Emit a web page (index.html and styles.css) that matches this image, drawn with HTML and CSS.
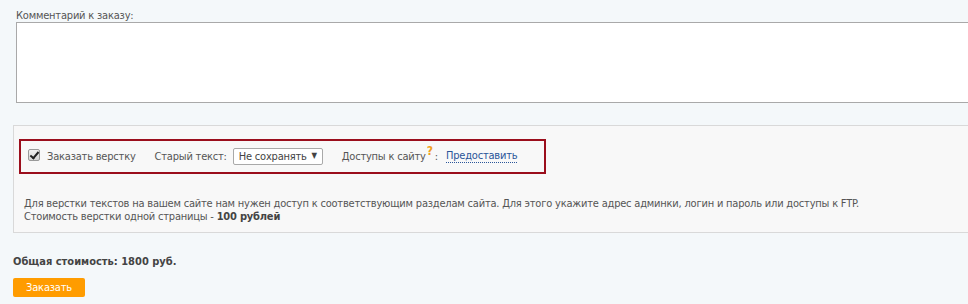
FILE: index.html
```html
<!DOCTYPE html>
<html lang="ru">
<head>
    <meta charset="UTF-8">
    <title>Заказ</title>
    <link rel="stylesheet" href="styles.css">
</head>
<body>
    <div class="order">
        <div class="comment">
            <label class="comment-label" for="comment">Комментарий к заказу:</label>
            <textarea id="comment" class="comment-field"></textarea>
        </div>

        <div class="layout-panel">
            <div class="layout-options">
                <label class="check">
                    <input type="checkbox" checked>
                    <span>Заказать верстку</span>
                </label>
                <span class="old-text">Старый текст:</span>
                <span class="fake-select">Не сохранять <span class="arrow">▼</span></span>
                <span class="access">Доступы к сайту<sup class="hint">?</sup>:</span>
                <a href="#" class="give-link">Предоставить</a>
            </div>
            <p class="layout-note">
                Для верстки текстов на вашем сайте нам нужен доступ к соответствующим разделам сайта. Для этого укажите адрес админки, логин и пароль или доступы к FTP.<br>
                Стоимость верстки одной страницы - <b>100 рублей</b>
            </p>
        </div>

        <div class="total">Общая стоимость: 1800 руб.</div>
        <button class="order-btn">Заказать</button>
    </div>
</body>
</html>
```

FILE: styles.css
```css
body {
    margin: 0;
    background: #f4f8fa;
    font-family: 'DejaVu Sans Condensed', 'Liberation Sans', sans-serif;
    font-size: 11px;
    letter-spacing: -0.2px;
    color: #555;
    overflow: hidden;
}
.order {
    padding-left: 13px;
    width: 1000px;
}
.comment {
    padding: 9px 0 0 3px;
}
.comment-label {
    display: block;
    line-height: 13px;
}
.comment-field {
    display: block;
    box-sizing: border-box;
    width: 970px;
    height: 81px;
    margin: 0;
    border: 1px solid #a9a9a9;
    background: #fff;
    resize: none;
}
.layout-panel {
    box-sizing: border-box;
    margin-top: 22px;
    width: 975px;
    height: 108px;
    padding: 13px 5px 0;
    background: #f8f8f8;
    border: 1px solid #d9d9d9;
}
.layout-options {
    box-sizing: border-box;
    display: flex;
    align-items: center;
    width: 527px;
    height: 35px;
    padding: 0 0 1px 7px;
    border: 2px solid #9b0e1c;
    white-space: nowrap;
}
.check {
    display: flex;
    align-items: center;
}
.check input {
    appearance: none;
    position: relative;
    box-sizing: border-box;
    width: 12px;
    height: 12px;
    margin: 0 7px 3px 0;
    border: 1px solid #9a9a9a;
    border-radius: 2px;
    background: linear-gradient(#f2f2f2, #d6d6d6);
}
.check input:checked::after {
    content: '';
    position: absolute;
    left: 3px;
    top: 0;
    width: 3px;
    height: 7px;
    border: solid #222;
    border-width: 0 2px 2px 0;
    transform: rotate(40deg);
}
.old-text {
    margin-left: 19px;
}
.fake-select {
    box-sizing: border-box;
    display: flex;
    justify-content: space-between;
    align-items: center;
    width: 90px;
    height: 17px;
    margin-left: 6px;
    padding: 0 5px 0 5px;
    border: 1px solid #a9a9a9;
    border-radius: 2px;
    background: #fff;
    color: #444;
}
.arrow {
    font-size: 8px;
    margin-bottom: 2px;
}
.access {
    margin-left: 19px;
}
.hint {
    color: #f0a020;
    font-weight: bold;
    font-size: 12px;
    line-height: 0;
    vertical-align: 5px;
    margin: 0 2px 0 1px;
}
.give-link {
    margin-left: 8px;
    color: #2a5599;
    text-decoration: none;
    border-bottom: 1px dotted #2a5599;
}
.layout-note {
    margin: 23px 0 0 5px;
    line-height: 13px;
}
.layout-note b {
    color: #444;
}
.total {
    margin-top: 22px;
    font-weight: bold;
    letter-spacing: 0;
    color: #444;
    line-height: 13px;
}
.order-btn {
    display: block;
    margin-top: 10px;
    width: 72px;
    height: 19px;
    padding: 0;
    border: 0;
    border-radius: 2px;
    background: #ff9c00;
    color: #fff;
    font-family: inherit;
    font-size: 11px;
    letter-spacing: inherit;
}
```
